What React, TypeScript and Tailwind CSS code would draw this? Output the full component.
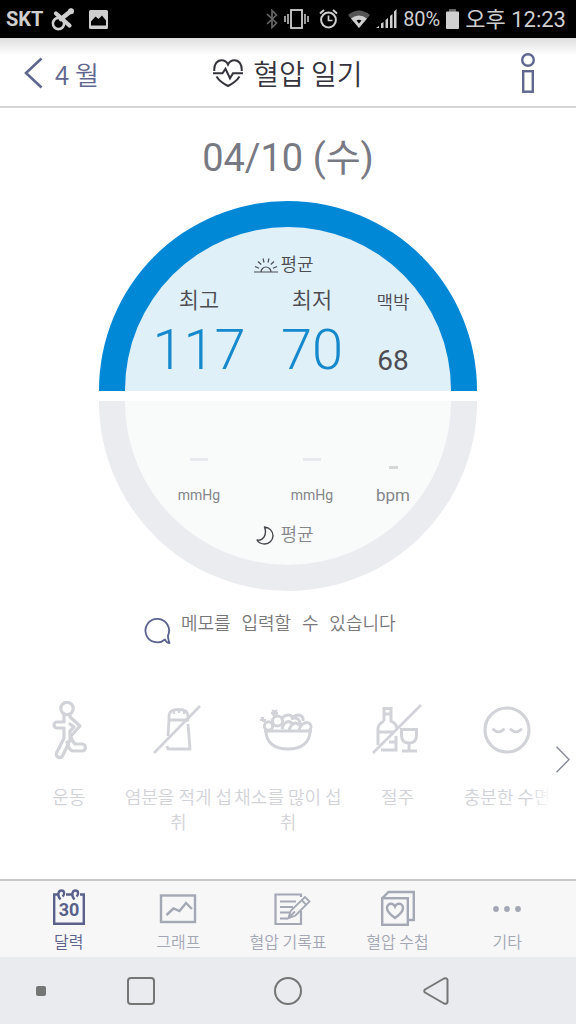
import type { ReactNode } from "react";

const KR = "font-['Noto_Sans_CJK_KR',sans-serif]";
const DIGITS = "font-[Roboto,'Noto_Sans_CJK_KR',sans-serif]";

function StatusBar() {
  return (
    <div className={`flex h-[38px] items-center justify-between bg-black pr-2.5 pl-1.5 text-[#cfcfcf] ${DIGITS}`}>
      <div className="flex items-center gap-2">
        <span className="text-xl font-bold">SKT</span>
        <svg width="24" height="24" viewBox="0 0 24 24" fill="none" stroke="currentColor">
          <circle cx="7.500" cy="16.500" r="5.600" strokeWidth="2.600" />
          <path d="M10 12 20 4" strokeWidth="4.600" strokeLinecap="round" />
          <path d="M5 6.500 18.500 18.500" strokeWidth="4.200" strokeLinecap="round" />
          <circle cx="20" cy="4.300" r="3" fill="currentColor" stroke="none" />
        </svg>
        <svg className="ml-1.5" width="19" height="19" viewBox="0 0 19 19" fill="currentColor">
          <path fillRule="evenodd" d="M1.500 0h16A1.500 1.500 0 0 1 19 1.500v16a1.500 1.500 0 0 1-1.500 1.500h-16A1.500 1.500 0 0 1 0 17.500v-16A1.500 1.500 0 0 1 1.500 0ZM2 15.500h15v-5L13 5.500 9.500 9 6.500 6.500 2 11.500Z" />
        </svg>
      </div>
      <div className="flex items-center gap-1.5">
        <svg width="12" height="20" viewBox="0 0 12 20" fill="none" stroke="#666" strokeWidth="1.700">
          <path d="m1 5 9.500 9L6 18.500v-17L10.500 6 1 15" />
        </svg>
        <svg width="25" height="20" viewBox="0 0 25 20" fill="none" stroke="currentColor" strokeWidth="1.800">
          <rect x="7" y="1" width="11" height="18" />
          <path d="M4 5v10M1 7v6M21 5v10M24 7v6" strokeWidth="1.500" />
        </svg>
        <svg className="mx-1" width="19" height="20" viewBox="0 0 19 20" fill="none" stroke="currentColor">
          <circle cx="9.500" cy="11" r="7.400" strokeWidth="2" />
          <path d="M9.500 6.500v5h4" strokeWidth="1.700" />
          <path d="m1 4.500 4-3.500M18 4.500 14 1" strokeWidth="2" />
        </svg>
        <svg width="22" height="18" viewBox="0 0 22 18">
          <path d="M0 5Q11-4 22 5L11 18Z" fill="#555" />
          <path d="M3 8.500Q11 2.500 19 8.500L11 18Z" fill="currentColor" />
          <path d="M8.500 10.500q2.500-1.500 5 0L11 13.500Z" fill="#000" />
        </svg>
        <svg width="21" height="20" viewBox="0 0 21 20" fill="currentColor">
          <path d="M0 19h3v-2zM5 19h2.500v-6L5 14.500zM9.500 19H12V9L9.500 11zM14 19h2.500V5L14 7zM18 19h2.500V0L18 2.500z" />
        </svg>
        <span className="text-xl">80%</span>
        <svg width="13" height="20" viewBox="0 0 13 20">
          <rect x="3" y="0" width="7" height="4" fill="#666" />
          <rect x="0" y="2.500" width="13" height="17.500" rx="1" fill="currentColor" />
        </svg>
        <span className="text-[22px]">오후 12:23</span>
      </div>
    </div>
  );
}

function Header() {
  return (
    <header className={`grid h-[70px] grid-cols-[1fr_auto_1fr] items-center border-b-2 border-[#d5d5d5] bg-linear-to-b from-[#dedede] to-white to-25% px-6 pt-0.5 ${KR}`}>
      <button type="button" className="flex items-center gap-3 justify-self-start text-[28px] font-[350] text-[#5f678e]">
        <svg width="19" height="32" viewBox="0 0 19 32" fill="none" stroke="currentColor" strokeWidth="2.600">
          <path d="M17.500 1.500 2 16l15.500 14.500" />
        </svg>
        <span className="text-[26px]">4 월</span>
      </button>
      <h1 className="flex items-center gap-2.5 text-[28px] font-[350] text-[#35333c]">
        <svg width="30" height="28" viewBox="0 0 30 28" fill="none" stroke="currentColor" strokeWidth="2">
          <path d="M1.300 12C.8 5.500 4 1.200 8.500 1.200c3 0 5.300 1.600 6.500 4.300 1.200-2.700 3.500-4.300 6.500-4.300 4.500 0 7.700 4.300 7.200 10.800M3.500 17.500C6 21.500 10 24.500 15 27c5-2.500 9-5.500 11.500-9.500" />
          <path d="M0 14.300h9.500l3-4.500 4.500 9.500 3-5h10" />
        </svg>
        혈압 일기
      </h1>
      <button type="button" aria-label="정보" className="mr-4 justify-self-end text-[#5f678e]">
        <svg width="16" height="42" viewBox="0 0 16 42" fill="none" stroke="currentColor" strokeWidth="2.400">
          <circle cx="8" cy="8" r="5.800" />
          <rect x="3.200" y="19.200" width="9.600" height="20.500" />
        </svg>
      </button>
    </header>
  );
}

const COLUMNS = "grid w-full grid-cols-[120fr_106fr_56fr] items-end pr-[30px] pl-3.5 text-center";

function Gauge() {
  return (
    <div className={`mx-auto flex w-full max-w-[378px] flex-col gap-2.5 text-[#4c4c52] ${DIGITS}`}>
      <section className="flex h-[190px] flex-col rounded-t-full border-[26px] border-b-0 border-[#0088d6] bg-[#dff0f9]">
        <h2 className="mt-[22px] flex h-8 items-center justify-center gap-0.5 pr-2 text-lg font-[350]">
          <svg width="24" height="15" viewBox="0 0 24 15" fill="none" stroke="currentColor" strokeWidth="1.200">
            <path d="M0 14h24M7 14a5 5 0 0 1 10 0M1 8.500l4 1.700M4 3.500l3.200 3M9 .5l1 4M15 .5l-1 4M20 3.500l-3.200 3M23 8.500l-4 1.700" />
          </svg>
          평균
        </h2>
        <div className={`${COLUMNS} mt-0.5 h-9 text-[22px] leading-9 font-[350]`}>
          <span>최고</span>
          <span>최저</span>
          <span className="text-lg leading-8">맥박</span>
        </div>
        <div className={`${COLUMNS} h-[62px] text-[56px] leading-[62px] font-light text-[#1689cc]`}>
          <span>117</span>
          <span>70</span>
          <span className="text-[28px] leading-10 font-normal text-[#4c4c52]">68</span>
        </div>
      </section>
      <section className="flex h-[190px] flex-col rounded-b-full border-[26px] border-t-0 border-[#ebecf0] bg-[#f8fbfa] text-[#85868a]">
        <div className={`${COLUMNS} mt-14 h-3`} aria-hidden="true">
          <span className="mx-auto mb-2 h-[3px] w-[18px] bg-[#e8e9ee]" />
          <span className="mx-auto mb-2 h-[3px] w-[18px] bg-[#e8e9ee]" />
          <span className="mx-auto h-[3px] w-[9px] bg-[#d5d7d9]" />
        </div>
        <div className={`${COLUMNS} mt-2.5 h-8 text-sm leading-8`}>
          <span>mmHg</span>
          <span>mmHg</span>
          <span className="text-[17px] leading-8">bpm</span>
        </div>
        <h2 className="mt-2 flex h-8 items-center justify-center gap-1.5 pr-1.5 text-lg font-[350]">
          <svg width="18" height="19" viewBox="0 0 18 19" fill="none" stroke="#45454b" strokeWidth="1.400" strokeLinejoin="round">
            <path d="M8.500 1c5 .5 8.500 4.200 8.500 8.800A8.300 8.300 0 0 1 8.700 18C5.500 18 2.500 16.500 1 14c6 .8 10.500-5 7.500-13Z" />
          </svg>
          평균
        </h2>
      </section>
    </div>
  );
}

const habits: { label: string; icon: ReactNode }[] = [
  {
    label: "운동",
    icon: (
      <svg width="60" height="60" viewBox="0 0 60 60" fill="none" stroke="currentColor" strokeWidth="3.200" strokeLinejoin="round" strokeLinecap="round">
        <circle cx="28" cy="8.500" r="6.200" />
        <path d="M25 14v8h-7a2.500 2.500 0 0 0 0 6h7v10l-7.500 15c-1 4.500 4.500 6.500 6.500 2l8-17" />
        <path d="M31 14v3l10 9-9 10c0 4 2 6 4 8h7c4.500 0 4.500 7 0 7h-9c-3 0-5-5-6-9" />
        <path d="m31 24 4 3-4 4v7" />
      </svg>
    ),
  },
  {
    label: "염분을 적게 섭취",
    icon: (
      <svg width="60" height="60" viewBox="0 0 60 60" fill="none" stroke="currentColor" strokeWidth="2.800" strokeLinejoin="round">
        <path d="M21 20v-4c0-5 4-6.500 9.500-6.500S40 11 40 16v4ZM21 20l-1 16M40 24l2 25H20l-1-3" />
        <path d="M26 10v4M31 10v3M36 10v4" strokeWidth="2.200" />
        <path d="M6 53 52 6" strokeWidth="2.600" />
      </svg>
    ),
  },
  {
    label: "채소를 많이 섭취",
    icon: (
      <svg width="60" height="60" viewBox="-2 -9 60 60" fill="none" stroke="currentColor" strokeWidth="3" strokeLinejoin="round">
        <path d="M4 22h48M6 22c0 12 9 18 22 18s22-6 22-18" />
        <circle cx="8.500" cy="17" r="4.200" />
        <circle cx="17.500" cy="12" r="5" />
        <path d="M22 9c5-5 10-3 11 0M22 20c2-7 6-9 10-6M29 21c2-6 6-9 10-5M33 8c6-4 11-1 10 4M31 10c6-3 10 1 9 8M39 21c2-7 8-9 11-6 2 2 1 5-1 7" />
        <path d="M3 8v5M0 11h6M1 8l4 5M14 1v6M11 4h7M12 1l5 5M17 1l-5 5" strokeWidth="1.800" />
      </svg>
    ),
  },
  {
    label: "절주",
    icon: (
      <svg width="60" height="60" viewBox="0 0 60 60" fill="none" stroke="currentColor" strokeWidth="3">
        <path d="M16 21V8.500h7V21c4 2 6 4 6 8M16 21c-4 2-6 4-6 8v16M10 32h16M16 14h7M13 50h15V36M21 42h7" />
        <path d="M33.500 29.500h15v6c0 5-3 7.500-7.500 7.500s-7.500-2.500-7.500-7.500ZM41 43v8M34 51h15" />
        <path d="M5 53 53 5" strokeWidth="2.600" />
      </svg>
    ),
  },
  {
    label: "충분한 수면",
    icon: (
      <svg width="60" height="60" viewBox="0 0 60 60" fill="none" stroke="currentColor" strokeWidth="3.200" strokeLinecap="round">
        <circle cx="30" cy="30" r="22" />
        <path d="M16.500 29.500c3 3 7 3 10 0M34 29.500c3 3 7 3 10 0" strokeWidth="3" />
      </svg>
    ),
  },
];

function Habits() {
  return (
    <section className={`relative mt-14 ${KR}`}>
      <ul className="grid grid-cols-5 px-3.5 text-center text-lg leading-[25px] font-[350] text-[#d2d3d8]">
        {habits.map((habit) => (
          <li key={habit.label} className="flex flex-col items-center gap-6">
            {habit.icon}
            <span>{habit.label}</span>
          </li>
        ))}
      </ul>
      <div className="absolute inset-y-0 right-0 flex w-12 items-start justify-end bg-linear-to-r from-white/0 to-white to-50% pt-[46px] pr-1.5">
        <button type="button" aria-label="다음" className="text-[#898c98]">
          <svg width="14" height="27" viewBox="0 0 14 27" fill="none" stroke="currentColor" strokeWidth="1.500">
            <path d="m.5.8 12.500 12.700L.5 26.200" />
          </svg>
        </button>
      </div>
    </section>
  );
}

const tabs: { label: string; icon: ReactNode }[] = [
  {
    label: "달력",
    icon: (
      <svg width="36" height="38" viewBox="0 0 36 38" fill="none" stroke="currentColor" strokeWidth="2.400">
        <path d="M8 5.500H3.200v29.300h29.600V5.500H29M15 5.500h6" />
        <path d="M9.500 10.500C6 7 7 1.500 10.500 1.500c3 0 3.500 4 1 6M23.500 10.500C20 7 21 1.500 24.500 1.500c3 0 3.500 4 1 6" />
        <text x="18" y="27" textAnchor="middle" fill="currentColor" stroke="none" fontSize="18" fontWeight="700" className={DIGITS}>30</text>
      </svg>
    ),
  },
  {
    label: "그래프",
    icon: (
      <svg width="38" height="38" viewBox="0 0 38 38" fill="none" stroke="currentColor" strokeWidth="2.400">
        <rect x="2" y="6.500" width="34" height="26.500" />
        <path d="m7.500 26 7-6.500 6 2.500 6.500-8 6 6" />
      </svg>
    ),
  },
  {
    label: "혈압 기록표",
    icon: (
      <svg width="46" height="38" viewBox="-9 0 46 38" fill="none" stroke="currentColor" strokeWidth="2.200">
        <path d="M27 8V5.500H1.500V35H27V22" />
        <path d="M6 12.500h16M6 18h13M6 23.500h10M6 29.500h7" />
        <path d="m14 29.500 3-8L31 8l4.500 4.500-14 14ZM27.500 11l4 4M14 29.500l7-7" strokeWidth="1.800" />
      </svg>
    ),
  },
  {
    label: "혈압 수첩",
    icon: (
      <svg width="38" height="38" viewBox="0 0 38 38" fill="none" stroke="currentColor" strokeWidth="2.400">
        <rect x="3.200" y="9.200" width="25.600" height="26.600" />
        <path d="m3.500 9 6-6h25.300v28H29" />
        <path d="M16 29c-5-3.500-8-6.500-8-10 0-2.800 2-4.300 4-4.300 1.800 0 3.200 1 4 2.800.8-1.800 2.200-2.800 4-2.800 2 0 4 1.500 4 4.300 0 3.500-3 6.500-8 10Z" />
      </svg>
    ),
  },
  {
    label: "기타",
    icon: (
      <svg width="38" height="38" viewBox="0 0 38 38" fill="currentColor">
        <circle cx="8" cy="20" r="2.900" />
        <circle cx="19" cy="20" r="2.900" />
        <circle cx="30" cy="20" r="2.900" />
      </svg>
    ),
  },
];

function TabBar() {
  return (
    <nav className={`grid h-[78px] grid-cols-5 border-t-2 border-[#c9c9cb] bg-[#f7f7f8] px-3.5 ${KR}`}>
      {tabs.map((tab, i) => (
        <button
          key={tab.label}
          type="button"
          className={`flex flex-col items-center pt-2 text-base leading-7 font-[350] ${i === 0 ? "text-[#5a618a]" : "text-[#a4a8b4]"}`}
        >
          {tab.icon}
          {tab.label}
        </button>
      ))}
    </nav>
  );
}

function SystemNav() {
  return (
    <div className="grid h-[67px] grid-cols-[82fr_117fr_178fr_117fr_82fr] place-items-center bg-[#e9ebee] text-[#747675]">
      <button type="button" aria-label="고정" className="size-2.5 rounded-xs bg-current" />
      <button type="button" aria-label="최근 앱" className="size-7 rounded-sm border-2 border-current" />
      <button type="button" aria-label="홈" className="size-7 rounded-full border-2 border-current" />
      <button type="button" aria-label="뒤로">
        <svg width="26" height="28" viewBox="0 0 26 28" fill="none" stroke="currentColor" strokeWidth="2" strokeLinejoin="round">
          <path d="M2 12.500 21 1.500q3-1 3.500 1.500v22q-.5 2.500-3.500 1.500L2 15.500q-1.500-1.500 0-3Z" />
        </svg>
      </button>
    </div>
  );
}

export default function App() {
  return (
    <div className="flex min-h-screen flex-col bg-white">
      <StatusBar />
      <Header />
      <main className="flex-1">
        <h2 className={`pt-5 pb-[13px] text-center text-[38px] leading-[60px] text-[#777983] ${DIGITS}`}>04/10 (수)</h2>
        <Gauge />
        <label className="mx-auto mt-5 flex w-72 gap-2.5">
          <svg className="mt-1.5" width="27" height="27" viewBox="0 0 27 27" fill="none" stroke="#59628c" strokeWidth="1.800" strokeLinejoin="round" aria-label="메모">
            <path d="M21 22.500A11.800 11.800 0 1 1 24 18.500c-.3 2.500.7 5 1.500 7.500-2 .3-3.500-1-4.500-3.500Z" />
          </svg>
          <input
            type="text"
            placeholder="메모를 입력할 수 있습니다"
            className="h-7 min-w-0 flex-1 bg-transparent font-['Liberation_Mono','Noto_Sans_CJK_KR',monospace] text-lg font-[350] outline-none placeholder:text-[#77777b]"
          />
        </label>
        <Habits />
      </main>
      <TabBar />
      <SystemNav />
    </div>
  );
}
